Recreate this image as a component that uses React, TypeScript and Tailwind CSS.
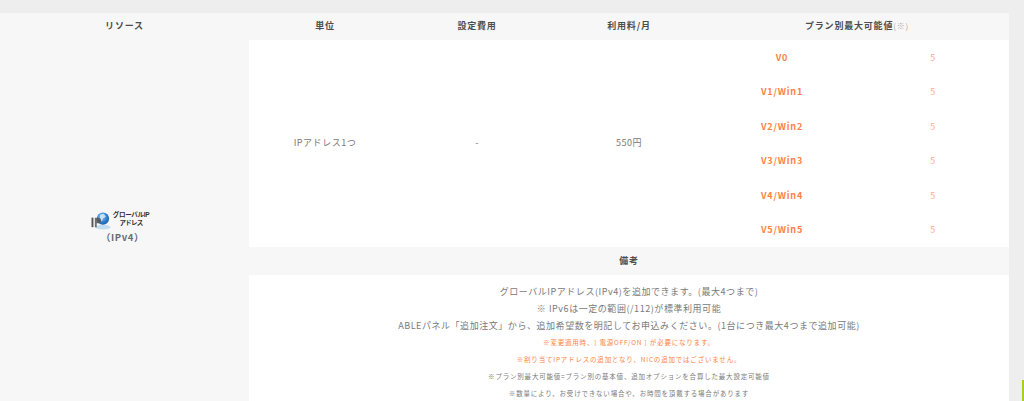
const font = '"Noto Sans CJK JP", "Noto Sans", sans-serif';

const plans = ['V0', 'V1/Win1', 'V2/Win2', 'V3/Win3', 'V4/Win4', 'V5/Win5'];

function GlobalIpLogo() {
  return (
    <div className="mr-[9px] flex h-[19px] items-start tracking-normal">
      <svg width="21" height="19" viewBox="0 0 21 20">
        <defs>
          <radialGradient id="globe" cx="0.4" cy="0.35" r="0.7">
            <stop offset="0" stopColor="#9ccbf2" />
            <stop offset="0.6" stopColor="#2f80d0" />
            <stop offset="1" stopColor="#1a5aa6" />
          </radialGradient>
        </defs>
        <ellipse cx="12" cy="17" rx="8" ry="2.5" fill="#c4dcf0" />
        <circle cx="12" cy="8" r="6.5" fill="url(#globe)" />
        <path d="M9 4l4-1 2 3-3 2-1 3-2-2z" fill="#dcecf8" opacity="0.8" />
        <rect x="0" y="7" width="2" height="10" fill="#555" />
        <path d="M3.5 17V7h3.5a3 3 0 0 1 0 6H5.5v4z" fill="#555" opacity="0.85" />
      </svg>
      <div className="ml-[1px] flex flex-col items-center font-['Liberation_Sans','Noto_Sans_CJK_JP',sans-serif] text-[6.5px] leading-[7.5px] font-bold tracking-[-0.3px] text-[#333]">
        <span>グローバルIP</span>
        <span className="tracking-[-0.8px]">アドレス</span>
      </div>
    </div>
  );
}

export default function App() {
  return (
    <div
      className="relative h-[401px] w-[1024px] overflow-hidden bg-[#eeeeee] pt-[13px] text-[9px] tracking-[0.55px] text-[#7a7a7a]"
      style={{ fontFamily: font }}
    >
      <div className="grid w-[1009px] grid-cols-[249px_152px_152px_152px_304px] grid-rows-[27px_207px_28px_126px]">
        {/* head */}
        <div className="flex items-center justify-center bg-[#f7f7f7] pb-[2px] font-bold tracking-[0.8px] text-[#4d4d4d]">リソース</div>
        <div className="flex items-center justify-center bg-[#f7f7f7] pb-[2px] font-bold tracking-[0.8px] text-[#4d4d4d]">単位</div>
        <div className="flex items-center justify-center bg-[#f7f7f7] pb-[2px] font-bold tracking-[0.8px] text-[#4d4d4d]">設定費用</div>
        <div className="flex items-center justify-center bg-[#f7f7f7] pb-[2px] font-bold tracking-[0.8px] text-[#4d4d4d]">利用料/月</div>
        <div className="flex items-center justify-center bg-[#f7f7f7] pb-[2px] font-bold tracking-[0.8px] text-[#4d4d4d]">
          プラン別最大可能値<span className="text-[8px] font-normal text-[#aaa]">(※)</span>
        </div>

        {/* resource cell */}
        <div className="row-span-3 flex flex-col items-center bg-[#f7f7f7] pt-[171px]">
          <GlobalIpLogo />
          <div className="mr-[4px] text-[9.5px] leading-[14px] font-bold tracking-[0.6px] text-[#6a6a78]">（IPv4）</div>
        </div>

        <div className="flex items-center justify-center bg-white pb-[2px]">IPアドレス1つ</div>
        <div className="flex items-center justify-center bg-white pb-[2px]">-</div>
        <div className="flex items-center justify-center bg-white pb-[2px]">550円</div>
        <div className="grid grid-cols-2 grid-rows-6 bg-white">
          {plans.map((p) => (
            <div key={p} className="contents">
              <div className="flex items-center justify-center pl-[2px] tracking-[0.8px] font-bold text-[#ff7f45]">{p}</div>
              <div className="flex items-center justify-center text-[#ffa98a]">5</div>
            </div>
          ))}
        </div>

        {/* notes */}
        <div className="col-span-4 flex items-center justify-center bg-[#f7f7f7] font-bold tracking-[0.8px] text-[#4d4d4d]">備考</div>
        <div className="col-span-4 flex flex-col items-center bg-white pt-[8px] text-center">
          <p className="leading-[17px]">グローバルIPアドレス(IPv4)を追加できます。(最大4つまで)</p>
          <p className="leading-[17px]">※ IPv6は一定の範囲(/112)が標準利用可能</p>
          <p className="leading-[17px]">ABLEパネル「追加注文」から、追加希望数を明記してお申込みください。(1台につき最大4つまで追加可能)</p>
          <p className="text-[6.5px] leading-[17px] tracking-[0.8px] text-[#ff7f45]">※変更適用時、[ 電源OFF/ON ] が必要になります。</p>
          <p className="text-[6.5px] leading-[17px] tracking-[0.8px] text-[#ff7f45]">※割り当てIPアドレスの追加となり、NICの追加ではございません。</p>
          <p className="text-[6.5px] leading-[17px] tracking-[0.8px]">※プラン別最大可能値=プラン別の基本値、追加オプションを合算した最大設定可能値</p>
          <p className="text-[6.5px] leading-[17px] tracking-[0.8px]">※数量により、お受けできない場合や、お時間を頂戴する場合があります</p>
        </div>
      </div>
      <div className="absolute right-0 bottom-0 h-[21px] w-[2px] bg-[#a8cf1e]" />
    </div>
  );
}
